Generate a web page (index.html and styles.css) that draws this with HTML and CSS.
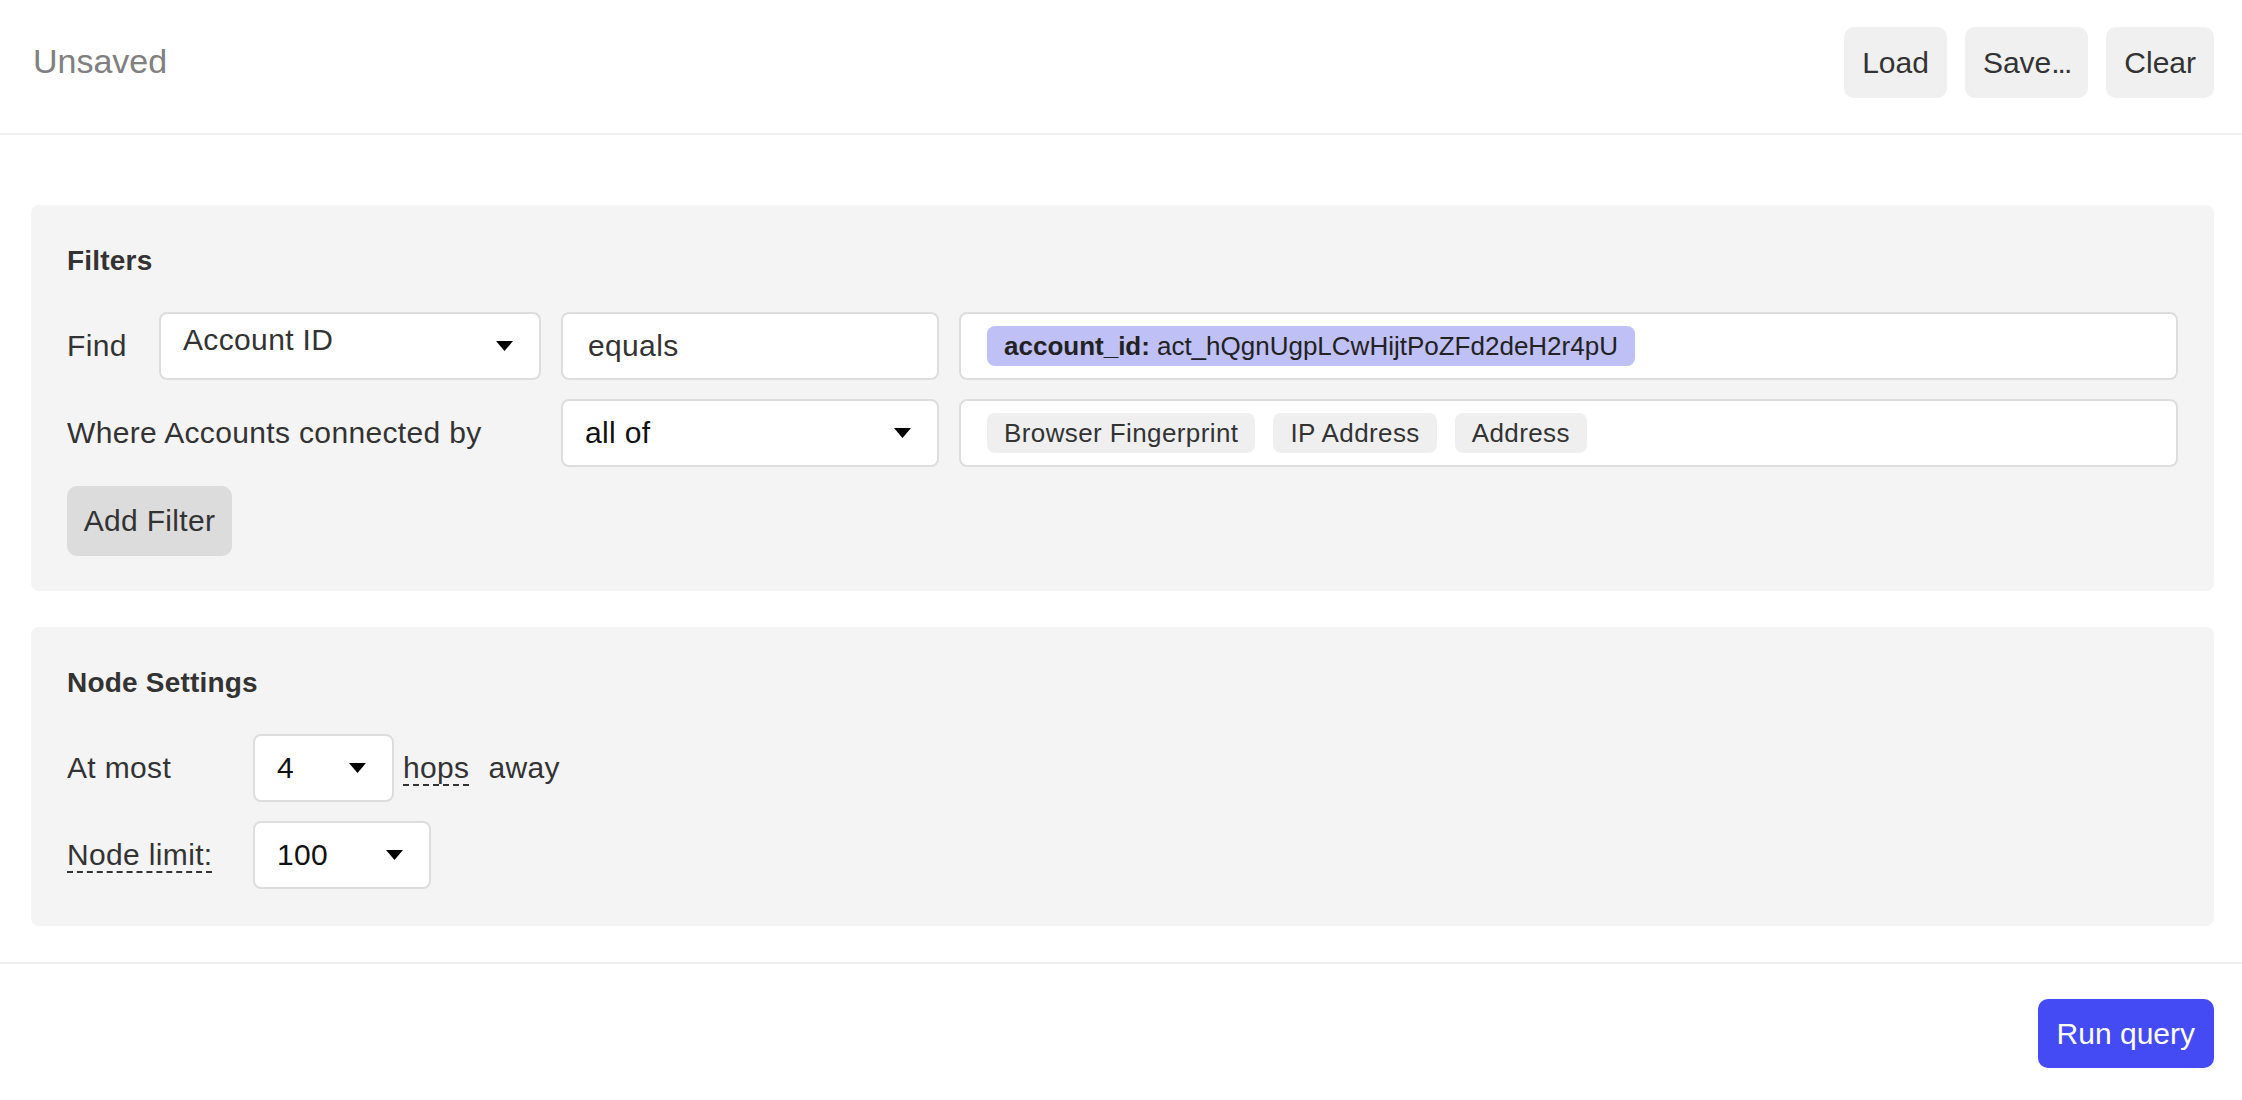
FILE: index.html
```html
<!DOCTYPE html>
<html lang="en">
<head>
<meta charset="utf-8">
<title>Query builder</title>
<link rel="stylesheet" href="styles.css">
</head>
<body>
  <header class="topbar">
    <span class="doc-title">Unsaved</span>
    <div class="topbar-actions">
      <button class="btn btn-light">Load</button>
      <button class="btn btn-light">Save<span class="dots">...</span></button>
      <button class="btn btn-light">Clear</button>
    </div>
  </header>

  <main class="content">
    <section class="panel panel-filters">
      <h2 class="panel-title">Filters</h2>
      <div class="filter-grid">
        <span class="label">Find</span>
        <div class="select select-top">
          <span>Account ID</span>
          <svg class="caret" width="17" height="10" viewBox="0 0 17 10"><path d="M0 0H17L8.5 10Z"/></svg>
        </div>
        <div class="input">equals</div>
        <div class="input chips">
          <span class="chip chip-accent"><b>account_id:</b> act_hQgnUgpLCwHijtPoZFd2deH2r4pU</span>
        </div>

        <span class="label span-2">Where Accounts connected by</span>
        <div class="select">
          <span class="dark">all of</span>
          <svg class="caret" width="17" height="10" viewBox="0 0 17 10"><path d="M0 0H17L8.5 10Z"/></svg>
        </div>
        <div class="input chips">
          <span class="chip">Browser Fingerprint</span>
          <span class="chip">IP Address</span>
          <span class="chip">Address</span>
        </div>
      </div>
      <button class="btn btn-mid add-filter">Add Filter</button>
    </section>

    <section class="panel panel-nodes">
      <h2 class="panel-title">Node Settings</h2>
      <div class="setting-row">
        <span class="label setting-label">At most</span>
        <div class="select select-hops">
          <span class="dark">4</span>
          <svg class="caret" width="17" height="10" viewBox="0 0 17 10"><path d="M0 0H17L8.5 10Z"/></svg>
        </div>
        <span class="label hint hops">hops</span>
        <span class="label away">away</span>
      </div>
      <div class="setting-row">
        <span class="label setting-label"><span class="hint">Node limit:</span></span>
        <div class="select select-limit">
          <span class="dark">100</span>
          <svg class="caret" width="17" height="10" viewBox="0 0 17 10"><path d="M0 0H17L8.5 10Z"/></svg>
        </div>
      </div>
    </section>
  </main>

  <footer class="footer">
    <button class="btn btn-primary">Run query</button>
  </footer>
</body>
</html>
```

FILE: styles.css
```css
* {
  box-sizing: border-box;
}

html, body {
  margin: 0;
  padding: 0;
  background: #ffffff;
}

body {
  font-family: "Liberation Sans", Arial, sans-serif;
  font-size: 30px;
  letter-spacing: 0.35px;
  color: #333333;
  width: 2242px;
  height: 1100px;
  overflow: hidden;
}

/* top bar */
.topbar {
  display: flex;
  align-items: center;
  justify-content: space-between;
  height: 135px;
  padding: 27px 28px 35px 33px;
  border-bottom: 2px solid #efefef;
}

.doc-title {
  font-size: 34px;
  letter-spacing: 0;
  color: #808080;
  margin-top: -2px;
}

.topbar-actions {
  display: flex;
  gap: 18px;
}

.btn {
  font-family: inherit;
  font-size: 30px;
  letter-spacing: 0;
  border: none;
  border-radius: 10px;
  cursor: pointer;
  line-height: 1;
}

.dots {
  letter-spacing: -2px;
}

.btn-light {
  height: 71px;
  padding: 0 18px;
  background: #f0f0f0;
  color: #333333;
}

.btn-mid {
  background: #dcdcdc;
  color: #333333;
  letter-spacing: 0.3px;
}

.btn-primary {
  height: 69px;
  padding: 0 19px;
  background: #444bf5;
  color: #ffffff;
}

/* panels */
.content {
  display: flex;
  flex-direction: column;
  gap: 36px;
  padding: 70px 28px 36px 31px;
}

.panel {
  background: #f4f4f4;
  border-radius: 8px;
  padding: 38px 36px 35px 36px;
}

.panel-nodes {
  padding-bottom: 37px;
}

.panel-title {
  margin: 0 0 33px 0;
  font-size: 28px;
  line-height: 36px;
  font-weight: 700;
  letter-spacing: 0.2px;
  color: #333333;
}

.filter-grid {
  display: grid;
  grid-template-columns: 72px 382px 378px 1fr;
  grid-auto-rows: 68px;
  column-gap: 20px;
  row-gap: 19px;
  align-items: center;
}

.span-2 {
  grid-column: span 2;
}

.label {
  color: #333333;
  white-space: nowrap;
}

.select,
.input {
  height: 68px;
  background: #ffffff;
  border: 2px solid #dddddd;
  border-radius: 8px;
  display: flex;
  align-items: center;
}

.select {
  justify-content: space-between;
  padding: 0 26px 0 22px;
}

.select-top > span {
  margin-top: -12px;
}

.input {
  padding: 0 25px;
}

.dark {
  color: #111111;
}

.caret {
  display: block;
  fill: #000000;
  flex: none;
}

.chips {
  gap: 18px;
  padding: 0 26px;
}

.chip {
  display: inline-flex;
  align-items: center;
  height: 40px;
  padding: 0 17px;
  border-radius: 8px;
  background: #efefef;
  font-size: 26px;
  letter-spacing: 0.4px;
  color: #333333;
  white-space: nowrap;
}

.chip-accent {
  background: #bfc0f6;
  color: #222222;
  letter-spacing: 0;
}

.chip-accent b {
  font-weight: 700;
  margin-right: 7px;
}

.add-filter {
  margin-top: 19px;
  height: 70px;
  width: 165px;
  padding: 0;
}

/* node settings */
.setting-row {
  display: flex;
  align-items: center;
  height: 68px;
}

.setting-row + .setting-row {
  margin-top: 19px;
}

.setting-label {
  width: 186px;
}

.select-hops {
  width: 141px;
}

.select-limit {
  width: 178px;
}

.hint {
  text-decoration: underline dashed #333333;
  text-decoration-thickness: 2px;
  text-underline-offset: 6px;
}

.hops {
  margin-left: 9px;
}

.away {
  margin-left: 19px;
}

/* footer */
.footer {
  display: flex;
  justify-content: flex-end;
  border-top: 2px solid #efefef;
  padding: 35px 28px 0 0;
}
```
